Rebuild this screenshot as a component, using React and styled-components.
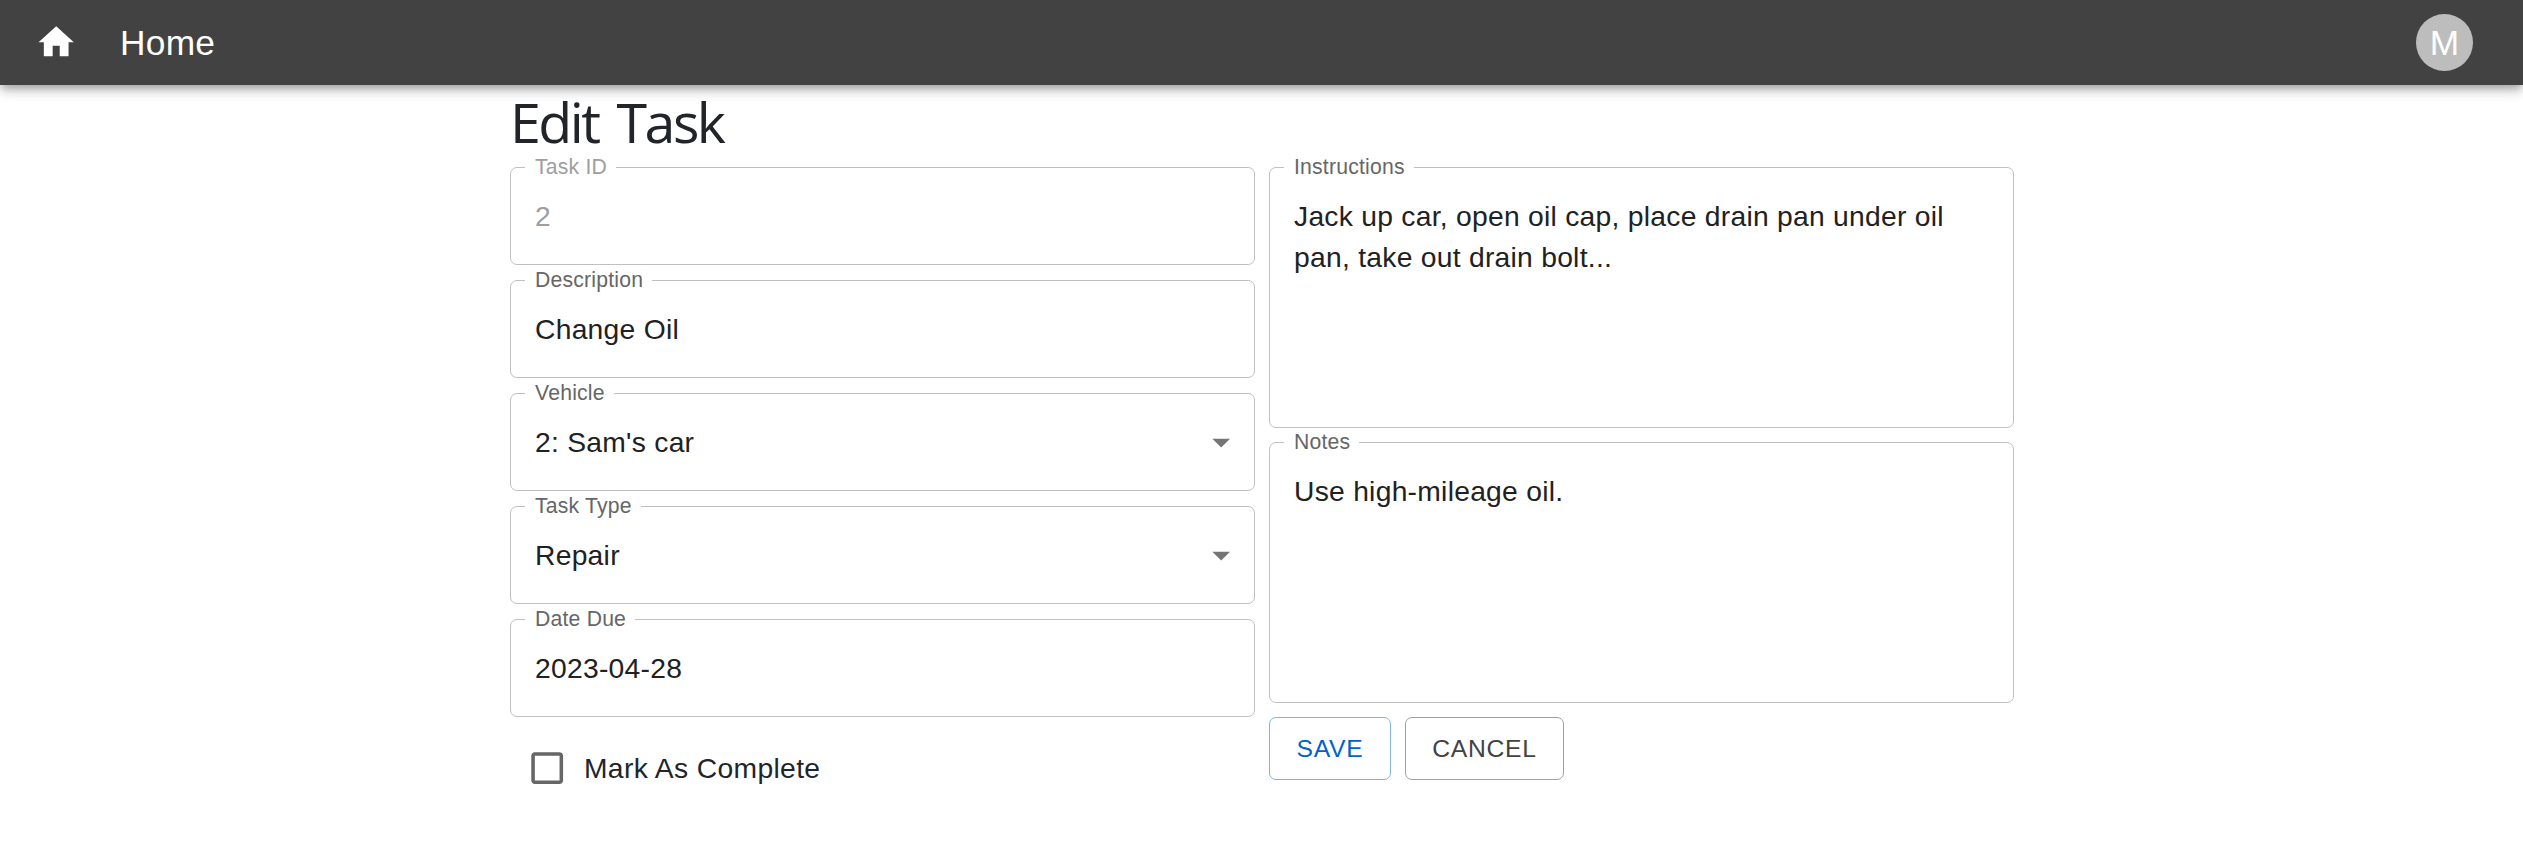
import React from "react";
import styled, { createGlobalStyle } from "styled-components";

const GlobalStyle = createGlobalStyle`
  * { box-sizing: border-box; }
  body {
    margin: 0;
    background: #fff;
    color: #212529;
    font-family: "Liberation Sans", Arial, sans-serif;
  }
`;

const AppBar = styled.header`
  position: relative;
  display: flex;
  align-items: center;
  height: 85px;
  padding: 0 50px 0 35px;
  background: #424242;
  color: #fff;
  box-shadow:
    0 3.5px 7px -1.77px rgba(0, 0, 0, 0.2),
    0 7px 8.8px 0 rgba(0, 0, 0, 0.14),
    0 1.77px 17.7px 0 rgba(0, 0, 0, 0.12);
`;

const Icon = styled.svg`
  display: block;
  flex: none;
  width: 42.4px;
  height: 42.4px;
  fill: currentColor;
  color: ${(p) => p.$color || "inherit"};
`;

const BarTitle = styled.div`
  flex: 1;
  margin-left: 42.6px;
  font-size: 35.3px;
  line-height: 56px;
  letter-spacing: 0.0075em;
`;

const Avatar = styled.div`
  width: 57px;
  height: 57px;
  border-radius: 50%;
  background: #bdbdbd;
  color: #fff;
  font-size: 35.3px;
  line-height: 57px;
  text-align: center;
`;

const Page = styled.main`
  width: 1504px;
  margin: 0 auto 0 510px;
`;

const Heading = styled.h2`
  margin: 0;
  height: 82px;
  font-family: "Open Sans", "Noto Sans", sans-serif;
  font-size: 55.5px;
  font-weight: 400;
  line-height: 73px;
  letter-spacing: -2.5px;
  word-spacing: 6px;
  color: #212529;
`;

const Columns = styled.div`
  display: grid;
  grid-template-columns: 745px 745px;
  gap: 14px;
  align-items: start;
`;

const Column = styled.div`
  display: flex;
  flex-direction: column;
  gap: ${(p) => p.$gap}px;
`;

const FieldBox = styled.div`
  position: relative;
  display: flex;
  justify-content: space-between;
  align-items: flex-start;
  height: ${(p) => (p.$tall ? 261 : 98)}px;
  padding: 28px ${(p) => (p.$tall ? 24 : 11)}px 0 24px;
  border: 1px solid #c0c0c0;
  border-radius: 7px;
  color: ${(p) => (p.$disabled ? "#9e9e9e" : "#212121")};
`;

const FieldLabel = styled.label`
  position: absolute;
  top: -13px;
  left: 14px;
  padding: 0 9px 0 10px;
  background: #fff;
  color: ${(p) => (p.$disabled ? "#9e9e9e" : "#666")};
  font-size: 21.2px;
  line-height: 24px;
  letter-spacing: 0.00938em;
  white-space: nowrap;
`;

const FieldValue = styled.div`
  font-size: 28.25px;
  line-height: 41px;
  letter-spacing: 0.00938em;
`;

const SelectArrow = styled(Icon)`
  margin: -1px 1px 0 0;
`;

const CheckRow = styled.label`
  display: flex;
  align-items: center;
  gap: 16px;
  margin-top: 15px;
  padding-left: 15.6px;
  height: 42px;
  font-size: 28.25px;
  line-height: 42px;
  letter-spacing: 0.0125em;
`;

const Actions = styled.div`
  display: flex;
  gap: 14px;
`;

const Button = styled.button`
  width: ${(p) => p.$width}px;
  height: 63px;
  padding: 0;
  border: 1px solid ${(p) => (p.$primary ? "#80b3e8" : "#a0a0a0")};
  border-radius: 7px;
  background: transparent;
  color: ${(p) => (p.$primary ? "#0062cc" : "#424242")};
  font-family: inherit;
  font-size: 24.7px;
  letter-spacing: 0.02857em;
  text-transform: uppercase;
`;

const Field = ({ label, value, disabled, tall, select }) => (
  <FieldBox $tall={tall} $disabled={disabled}>
    <FieldLabel $disabled={disabled}>{label}</FieldLabel>
    <FieldValue>{value}</FieldValue>
    {select && (
      <SelectArrow viewBox="0 0 24 24" $color="#757575">
        <path d="M7 10l5 5 5-5z" />
      </SelectArrow>
    )}
  </FieldBox>
);

export default function App() {
  return (
    <>
      <GlobalStyle />
      <AppBar>
        <Icon viewBox="0 0 24 24">
          <path d="M10 20v-6h4v6h5v-8h3L12 3 2 12h3v8z" />
        </Icon>
        <BarTitle>Home</BarTitle>
        <Avatar>M</Avatar>
      </AppBar>
      <Page>
        <Heading>Edit Task</Heading>
        <Columns>
          <Column $gap={15}>
            <Field label="Task ID" value="2" disabled />
            <Field label="Description" value="Change Oil" />
            <Field label="Vehicle" value="2: Sam's car" select />
            <Field label="Task Type" value="Repair" select />
            <Field label="Date Due" value="2023-04-28" />
            <CheckRow>
              <Icon viewBox="0 0 24 24" $color="#666">
                <path d="M19 5v14H5V5h14m0-2H5c-1.100 0-2 .9-2 2v14c0 1.100.9 2 2 2h14c1.100 0 2-.9 2-2V5c0-1.100-.9-2-2-2z" />
              </Icon>
              Mark As Complete
            </CheckRow>
          </Column>
          <Column $gap={14}>
            <Field
              label="Instructions"
              value="Jack up car, open oil cap, place drain pan under oil pan, take out drain bolt..."
              tall
            />
            <Field label="Notes" value="Use high-mileage oil." tall />
            <Actions>
              <Button $width={122} $primary>Save</Button>
              <Button $width={159}>Cancel</Button>
            </Actions>
          </Column>
        </Columns>
      </Page>
    </>
  );
}
